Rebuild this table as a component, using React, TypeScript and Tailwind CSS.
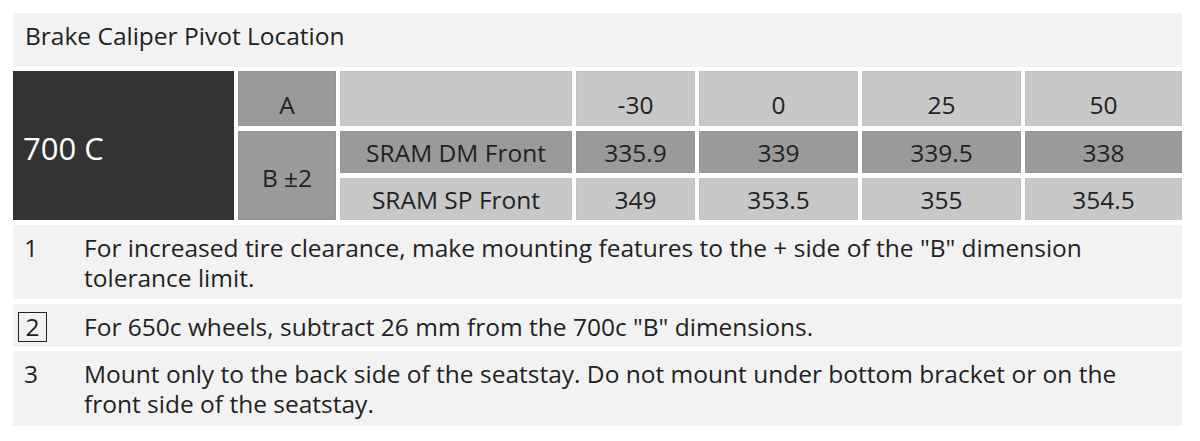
import React from "react";

const font = { fontFamily: "'Open Sans', 'Noto Sans', sans-serif" };

export default function App() {
  const light = "bg-[#c8c8c8] border border-[#c2c2c2]";
  const mid = "bg-[#9a9a9a] border border-[#939393]";
  const cell = "flex items-center justify-center text-[24.5px] text-[#222]";
  return (
    <div className="w-[1200px] h-[441px] bg-white pt-[13px] pl-[13px]" style={font}>
      <div className="w-[1169px] flex flex-col">
        <div className="h-[54px] bg-[#f2f2f2] flex items-center pl-[12px] text-[24.5px] text-[#222] pb-[7px]">
          Brake Caliper Pivot Location
        </div>
        <div className="mt-[4px] grid grid-cols-[221px_98px_232px_119px_159px_159px_157px] grid-rows-[55px_42px_42px] gap-x-[4px] gap-y-[5px]">
          <div className="row-span-3 bg-[#333333] flex items-center pl-[10px] pt-[6px] text-[31px] text-white">
            700 C
          </div>
          <div className={`${mid} ${cell} pt-[14px]`}>A</div>
          <div className={`${light}`}></div>
          <div className={`${light} ${cell} pt-[14px]`}>-30</div>
          <div className={`${light} ${cell} pt-[14px]`}>0</div>
          <div className={`${light} ${cell} pt-[14px]`}>25</div>
          <div className={`${light} ${cell} pt-[14px]`}>50</div>
          <div className={`${mid} ${cell} row-span-2 pt-[5px]`}>B ±2</div>
          <div className={`${mid} ${cell} pt-[3px]`}>SRAM DM Front</div>
          <div className={`${mid} ${cell} pt-[3px]`}>335.9</div>
          <div className={`${mid} ${cell} pt-[3px]`}>339</div>
          <div className={`${mid} ${cell} pt-[3px]`}>339.5</div>
          <div className={`${mid} ${cell} pt-[3px]`}>338</div>
          <div className={`${light} ${cell} pt-[2px]`}>SRAM SP Front</div>
          <div className={`${light} ${cell} pt-[2px]`}>349</div>
          <div className={`${light} ${cell} pt-[2px]`}>353.5</div>
          <div className={`${light} ${cell} pt-[2px]`}>355</div>
          <div className={`${light} ${cell} pt-[2px]`}>354.5</div>
        </div>
        <div className="mt-[5px] h-[74px] bg-[#f2f2f2] flex text-[24.5px] leading-[30px] text-[#222] pt-[8px]">
          <div className="w-[71px] pl-[11px] shrink-0">1</div>
          <div className="pr-[28px]">
            For increased tire clearance, make mounting features to the + side of the "B" dimension tolerance limit.
          </div>
        </div>
        <div className="mt-[5px] h-[43px] bg-[#f2f2f2] flex items-start text-[24.5px] leading-[30px] text-[#222] pt-[8px]">
          <div className="w-[71px] pl-[5px] shrink-0">
            <span className="inline-flex w-[29px] h-[30px] border border-[#222] items-center justify-center">2</span>
          </div>
          <div>For 650c wheels, subtract 26 mm from the 700c "B" dimensions.</div>
        </div>
        <div className="mt-[4px] h-[75px] bg-[#f2f2f2] flex text-[24.5px] leading-[30px] text-[#222] pt-[8px]">
          <div className="w-[71px] pl-[11px] shrink-0">3</div>
          <div className="pr-[28px]">
            Mount only to the back side of the seatstay. Do not mount under bottom bracket or on the front side of the seatstay.
          </div>
        </div>
      </div>
    </div>
  );
}
